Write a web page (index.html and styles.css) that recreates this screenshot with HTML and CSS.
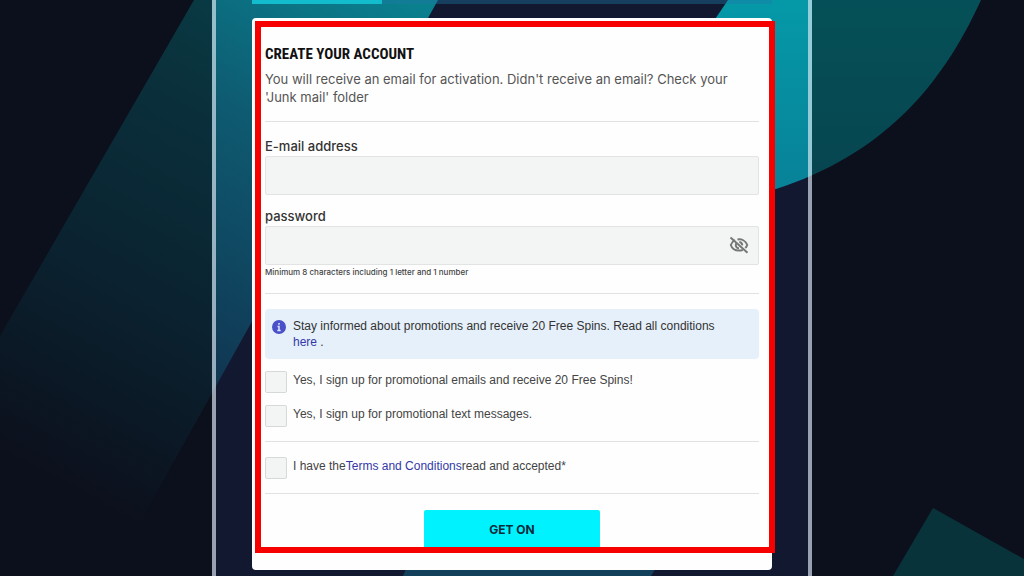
FILE: index.html
```html
<!DOCTYPE html>
<html lang="en">
<head>
  <meta charset="UTF-8">
  <meta name="viewport" content="width=device-width, initial-scale=1.0">
  <title>Create your account</title>
  <link rel="stylesheet" href="styles.css">
</head>
<body>
  <svg class="backdrop" viewBox="0 0 1024 576" preserveAspectRatio="xMidYMin slice" aria-hidden="true">
    <defs>
      <linearGradient id="band" gradientUnits="userSpaceOnUse" x1="400" y1="0" x2="120" y2="520">
        <stop offset="0" stop-color="#0a7f8e"/>
        <stop offset="0.3" stop-color="#0e5a70"/>
        <stop offset="0.65" stop-color="#103c58"/>
        <stop offset="1" stop-color="#121830"/>
      </linearGradient>
      <linearGradient id="disc" x1="0" y1="0" x2="0" y2="1">
        <stop offset="0" stop-color="#0599a8"/>
        <stop offset="1" stop-color="#088298"/>
      </linearGradient>
    </defs>
    <rect width="1024" height="576" fill="#121830"/>
    <path d="M194 0H438L428 18L250 325L110 576H0V336Z" fill="url(#band)"/>
    <path d="M728 0H981C940 90 880 155 776 189L640 189V130Z" fill="url(#disc)"/>
    <path d="M403 576L410 560H661L651 576Z" fill="#12405a"/>
    <path d="M933 508L893 576H1024V559Z" fill="#0b5f6e"/>
  </svg>

  <main class="panel">
    <div class="progress"><div class="progress-done"></div></div>

    <form class="card">
      <div class="section intro">
        <h1>CREATE YOUR ACCOUNT</h1>
        <p>You will receive an email for activation. Didn't receive an email? Check your 'Junk mail' folder</p>
      </div>

      <div class="section fields">
        <div class="field">
          <label for="email">E-mail address</label>
          <input type="email" id="email">
        </div>
        <div class="field">
          <label for="password">password</label>
          <div class="password-box">
            <input type="password" id="password">
            <button type="button" class="toggle" aria-label="Show password">
              <svg viewBox="0 0 20 18" width="20" height="18" fill="none" stroke="#777" stroke-width="2">
                <path d="M6 4.200C3.700 5.300 2.300 7.200 1.800 9C3 12.500 6.300 14.600 10 14.600C11.400 14.600 12.700 14.300 13.800 13.800"/>
                <path d="M8.500 3.500C13 2.800 16.800 5.200 18.200 9C17.800 10.200 17.200 11.200 16.300 12"/>
                <path d="M7.300 7.300C5.800 9.800 7.600 12.300 10 12.200"/>
                <path d="M10.300 5.900C12.200 6.200 13.300 7.600 13.200 9.400"/>
                <path d="M1.500 1.500L18.500 16.800"/>
              </svg>
            </button>
          </div>
          <small>Minimum 8 characters including 1 letter and 1 number</small>
        </div>
      </div>

      <div class="section">
        <div class="notice">
          <svg viewBox="0 0 14 14" width="14" height="14" aria-hidden="true">
            <circle cx="7" cy="7" r="7" fill="#4a50c8"/>
            <path d="M7 3V4.800M5.500 6.500H7V10.500M5.300 10.500H8.700" stroke="#dfe3fb" stroke-width="1.500" fill="none"/>
          </svg>
          <p>Stay informed about promotions and receive 20 Free Spins. Read all conditions <a href="#">here</a> .</p>
        </div>
        <div class="check">
          <input type="checkbox" id="promo-email">
          <label for="promo-email">Yes, I sign up for promotional emails and receive 20 Free Spins!</label>
        </div>
        <div class="check">
          <input type="checkbox" id="promo-text">
          <label for="promo-text">Yes, I sign up for promotional text messages.</label>
        </div>
      </div>

      <div class="section">
        <div class="check">
          <input type="checkbox" id="terms">
          <label for="terms">I have the<a href="#">Terms and Conditions</a>read and accepted*</label>
        </div>
      </div>

      <button type="submit" class="submit">GET ON</button>
      <div class="highlight"></div>
    </form>
  </main>
</body>
</html>
```
FILE: styles.css
```css
* {
  box-sizing: border-box;
}
body {
  margin: 0;
  background-color: #0c101b;
  color: #333;
  font-family: "Liberation Sans", Arial, sans-serif;
  font-size: 12px;
  line-height: 16px;
  overflow-x: hidden;
}
h1, p {
  margin: 0;
}
a {
  color: #3438a8;
  text-decoration: none;
}
.backdrop {
  position: absolute;
  top: 0;
  left: 0;
  width: 100%;
  height: 100%;
}
/* the huge shadow dims everything outside the panel */
.panel {
  position: relative;
  max-width: 600px;
  min-height: 100vh;
  margin: 0 auto;
  padding: 0 36px 6px;
  border: solid rgba(225, 235, 245, 0.65);
  border-width: 0 4px;
  box-shadow: 0 0 0 100vmax rgba(6, 8, 8, 0.5);
}
.progress {
  height: 4px;
  margin-bottom: 14px;
  background-color: rgba(30, 120, 165, 0.4);
}
.progress-done {
  width: 25%;
  height: 100%;
  background-color: #12bccc;
}
.card {
  position: relative;
  display: flex;
  flex-direction: column;
  padding: 22px 13px 20px;
  border-radius: 4px;
  background-color: #fefefe;
}
.section {
  display: flex;
  flex-direction: column;
  gap: 12px;
  padding: 15px 0 14px;
  border-bottom: 1px solid #dfe1e2;
}
.intro {
  gap: 2px;
  padding: 0 0 15px;
}
.intro h1 {
  color: #111;
  font-family: "Roboto Condensed", "Liberation Sans Narrow", Roboto, sans-serif;
  font-size: 15px;
  line-height: 28px;
}
.intro p {
  color: #555;
  font-family: Inter, sans-serif;
  font-size: 13px;
  line-height: 18px;
}
.field {
  display: flex;
  flex-direction: column;
  gap: 1px;
  font-family: Inter, sans-serif;
}
.field label {
  font-size: 13px;
  font-weight: 500;
  line-height: 18px;
}
.field input {
  width: 100%;
  height: 39px;
  padding: 0 12px;
  border: 1px solid #e2e4e4;
  border-radius: 2px;
  background-color: #f3f5f5;
}
.field small {
  color: #444;
  font-size: 8px;
  font-weight: 500;
  line-height: 13px;
}
.password-box {
  position: relative;
}
.toggle {
  position: absolute;
  top: 10px;
  right: 10px;
  display: flex;
  padding: 0;
  border: 0;
  background: none;
}
.notice {
  display: flex;
  gap: 7px;
  padding: 9px 28px 9px 7px;
  border-radius: 4px;
  background-color: #e6f0fa;
}
.notice svg {
  flex: none;
  margin-top: 2px;
}
.check {
  display: flex;
  gap: 6px;
}
.check input {
  appearance: none;
  flex: none;
  width: 22px;
  height: 22px;
  margin: 0;
  border: 1px solid #d6d9da;
  border-radius: 2px;
  background-color: #f3f5f5;
}
.check label {
  padding-top: 1px;
  color: #444;
}
.submit {
  align-self: center;
  width: 176px;
  height: 40px;
  margin-top: 16px;
  border: 0;
  border-radius: 2px;
  background-color: #00f2ff;
  color: #0a2a3a;
  font: bold 12px/16px Inter, sans-serif;
}
/* marks the form area, sits over the card */
.highlight {
  position: absolute;
  inset: 3px -3px 17px 3px;
  border: 6px solid #f60000;
  pointer-events: none;
}
```
